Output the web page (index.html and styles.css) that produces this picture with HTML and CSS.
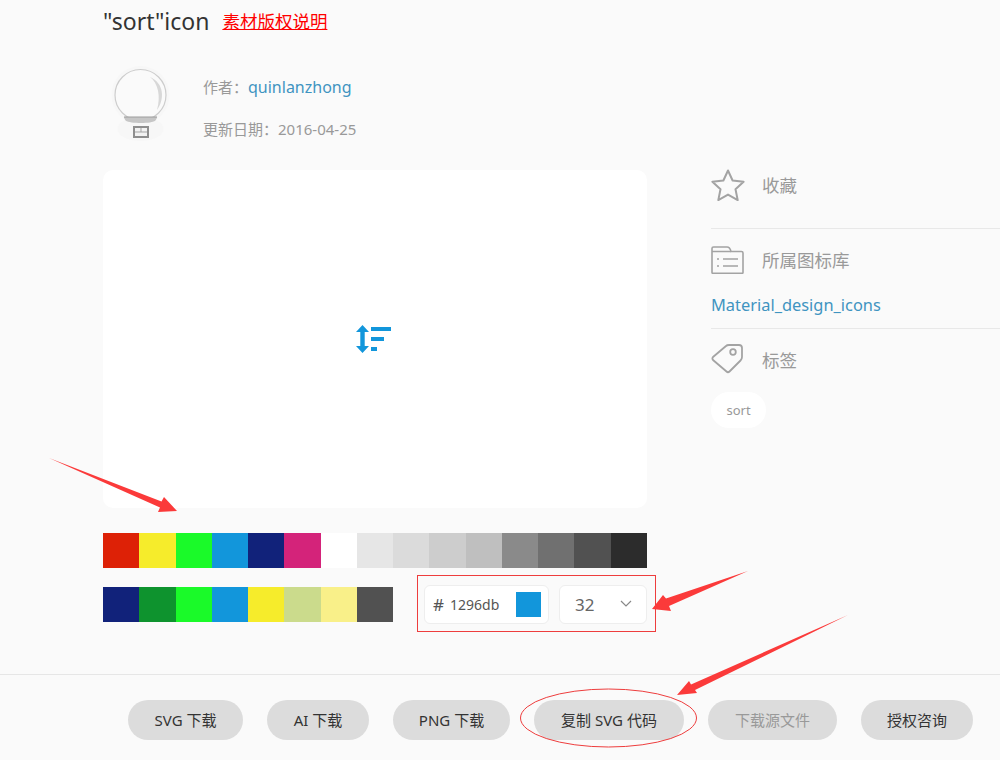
FILE: index.html
```html
<!DOCTYPE html>
<html lang="zh-CN">
<head>
  <meta charset="UTF-8" />
  <title>"sort"icon</title>
  <link rel="stylesheet" href="styles.css">
</head>
<body>
  <div class="main">
    <div class="left">
      <div class="title-row">
        <h1>"sort"icon</h1>
        <a class="license" href="#">素材版权说明</a>
      </div>
      <div class="author-row">
        <svg class="avatar" width="76" height="86" viewBox="0 0 76 86">
          <circle cx="37.500" cy="30" r="29" fill="#f7f7f7"/>
          <ellipse cx="37.500" cy="64" rx="23" ry="12" fill="#f7f7f7"/>
          <circle cx="37.500" cy="30" r="25.500" fill="#fafafa" stroke="#cdcdcd" stroke-width="1.200"/>
          <path d="M47 12c8 6 11 19 7 33 8-11 7-27-7-33z" fill="#d8d8d8"/>
          <path d="M21 52h33c0 1-1 3-2 4-2 1-7 2-14 2s-13-1-15-2c-1-1-2-3-2-4z" fill="#c6c6c6"/>
          <path d="M21 52h33" stroke="#9c9c9c" stroke-width="1"/>
          <rect x="31" y="62" width="14" height="10" fill="#f2f2f2" stroke="#8e8e8e" stroke-width="2"/>
          <path d="M32 67h12M38 63v4" stroke="#a5a5a5" stroke-width="1"/>
        </svg>
        <div class="author-info">
          <p class="author">作者：<a href="#">quinlanzhong</a></p>
          <p class="date">更新日期：2016-04-25</p>
        </div>
      </div>
      <div class="preview">
        <svg width="36" height="28" viewBox="0 0 36 28" fill="#1296db">
          <path d="M7.500 0L14 7H9.700v14H14l-6.500 7L1 21h4.300V7H1z"/>
          <rect x="16" y="2" width="20" height="4"/>
          <rect x="16" y="12" width="13" height="4"/>
          <rect x="16" y="22" width="6" height="4"/>
        </svg>
      </div>
      <div class="swatches swatches-wide">
        <span class="c-red"></span><span class="c-yellow"></span><span class="c-green"></span><span class="c-blue"></span><span class="c-navy"></span><span class="c-pink"></span><span class="c-white"></span><span class="c-g1"></span><span class="c-g2"></span><span class="c-g3"></span><span class="c-g4"></span><span class="c-g5"></span><span class="c-g6"></span><span class="c-g7"></span><span class="c-g8"></span>
      </div>
      <div class="color-row">
        <div class="swatches swatches-short">
          <span class="c-navy"></span><span class="c-dkgreen"></span><span class="c-green"></span><span class="c-blue"></span><span class="c-yellow"></span><span class="c-olive"></span><span class="c-paleyellow"></span><span class="c-g7"></span>
        </div>
        <div class="picker">
          <div class="hex-box">
            <span class="hash">#</span>
            <span class="hex">1296db</span>
            <span class="hex-color"></span>
          </div>
          <div class="size-box">
            <span>32</span>
            <svg width="12" height="7" viewBox="0 0 12 7" fill="none" stroke="#888" stroke-width="1.200"><path d="M1 1l5 5 5-5"/></svg>
          </div>
        </div>
      </div>
    </div>

    <div class="side">
      <div class="side-row fav">
        <svg width="34" height="32" viewBox="0 0 34 32" fill="none" stroke="#a3a3a3" stroke-width="2" stroke-linejoin="round"><path d="M17 1.500l4.600 10 11 1.300-8.100 7.500 2.200 10.800L17 25.600 7.300 31.100l2.200-10.800L1.400 12.800l11-1.300z"/></svg>
        <span>收藏</span>
      </div>
      <div class="side-block">
        <div class="side-row">
          <svg width="33" height="28" viewBox="0 0 33 28" fill="none" stroke="#a3a3a3" stroke-width="1.600"><path d="M1 26.500V2.500Q1 1 2.500 1H16q3 0 4 4.500h10.500q1.500 0 1.500 1.500v19.500q0 .8-.8.8H1.800q-.8 0-.8-.8z"/><path d="M1 5.500h19M6 13h2M6 20h2M12 13h15M12 20h15"/></svg>
          <span class="lib-label">所属图标库</span>
        </div>
        <a class="lib-link" href="#">Material_design_icons</a>
      </div>
      <div class="side-block tags">
        <div class="side-row">
          <svg width="33" height="31" viewBox="0 0 33 31" fill="none" stroke="#a3a3a3" stroke-width="1.800" stroke-linejoin="round"><path d="M2 13L15 2q1-1 3-1h10q3 0 3 3v9q0 2-1.500 3.500l-11 11q-1.500 1.500-3 0L2 16q-1.200-1.500 0-3z"/><circle cx="22" cy="8" r="2.800"/></svg>
          <span>标签</span>
        </div>
        <span class="tag">sort</span>
      </div>
    </div>
  </div>

  <div class="actions">
    <button class="btn btn-svg">SVG 下载</button>
    <button class="btn btn-ai">AI 下载</button>
    <button class="btn btn-png">PNG 下载</button>
    <button class="btn btn-copy">复制 SVG 代码</button>
    <button class="btn btn-source">下载源文件</button>
    <button class="btn btn-auth">授权咨询</button>
  </div>

  <!-- hand drawn annotations on top of the screenshot -->
  <svg class="marks" width="1000" height="760" viewBox="0 0 1000 760" fill="#fb3a3a">
    <path d="M49 458L161.500 501.500 164 497 177 511 158 512 160 507.500z"/>
    <path d="M748 571L666 598.500 663 595 652 609 671 611 669 606z"/>
    <path d="M848 615L691 684.500 689 681 677 695 697 693 695 690z"/>
    <ellipse cx="608.500" cy="718" rx="88" ry="29" fill="none" stroke="#ee3d3d" stroke-width="1"/>
  </svg>
</body>
</html>
```

FILE: styles.css
```css
* {
  box-sizing: border-box;
}

body {
  margin: 0;
  width: 1000px;
  height: 760px;
  overflow: hidden;
  position: relative;
  background: #fafafa;
  color: #333;
  font-family: "Noto Sans", "Noto Sans CJK SC", sans-serif;
}

a {
  text-decoration: none;
}

p {
  margin: 0;
}

.main {
  display: flex;
  height: 674px;
  padding-left: 103px;
}

.left {
  width: 544px;
  flex: none;
}

/* title */
.title-row {
  display: flex;
  align-items: center;
  gap: 13px;
  height: 44px;
  padding-bottom: 2px;
}

h1 {
  margin: 0;
  font-size: 23px;
  font-weight: 400;
  color: #333;
}

.license {
  margin-bottom: 2px;
  color: #f00;
  font-size: 17.500px;
  text-decoration: underline;
}

/* author */
.author-row {
  display: flex;
  height: 126px;
  padding-top: 21px;
}

.avatar {
  flex: none;
}

.author-info {
  margin-left: 24px;
  padding-top: 8px;
}

.author {
  font-size: 15px;
  line-height: 28px;
  color: #999;
}

.author a {
  font-size: 16px;
  color: #3f94c1;
}

.date {
  margin-top: 14px;
  font-size: 15px;
  line-height: 28px;
  color: #999;
}

.preview {
  height: 338px;
  background: #fff;
  border-radius: 10px;
  display: flex;
  align-items: center;
  justify-content: center;
}

.preview svg {
  margin-right: 4px;
}

/* colours */
.swatches {
  display: grid;
  height: 35px;
}

.swatches-wide {
  grid-template-columns: repeat(15, 1fr);
  margin-top: 25px;
}

.swatches-short {
  width: 290px;
  flex: none;
  grid-template-columns: repeat(8, 1fr);
}

.c-red { background: #dd2106; }
.c-yellow { background: #f6ec2b; }
.c-green { background: #1afa29; }
.c-blue { background: #1296db; }
.c-navy { background: #11227a; }
.c-pink { background: #d4237a; }
.c-white { background: #fff; }
.c-g1 { background: #e6e6e6; }
.c-g2 { background: #dbdbdb; }
.c-g3 { background: #cdcdcd; }
.c-g4 { background: #bfbfbf; }
.c-g5 { background: #8a8a8a; }
.c-g6 { background: #707070; }
.c-g7 { background: #515151; }
.c-g8 { background: #2c2c2c; }
.c-dkgreen { background: #0e932e; }
.c-olive { background: #cbdb8c; }
.c-paleyellow { background: #f9f089; }

.color-row {
  display: flex;
  align-items: center;
  margin-top: 9px;
}

.picker {
  display: flex;
  gap: 10px;
  width: 239px;
  height: 57px;
  flex: none;
  margin-left: 24px;
  margin-top: -2px;
  padding: 9px 8px 7px 6px;
  border: 1px solid #ee3d3d;
}

.hex-box,
.size-box {
  display: flex;
  align-items: center;
  background: #fff;
  border: 1px solid #eee;
  border-radius: 6px;
}

.hex-box {
  width: 125px;
  padding: 0 7px 0 8px;
  font-size: 14px;
  color: #555;
}

.hash {
  font-size: 17px;
  margin-right: 6px;
}

.hex-color {
  width: 25px;
  height: 25px;
  margin-left: auto;
  background: #1296db;
}

.size-box {
  width: 88px;
  padding: 0 14px 0 15px;
  justify-content: space-between;
  font-size: 17px;
  color: #666;
}

.size-box svg {
  margin-top: -2px;
}

/* right column */
.side {
  flex: 1;
  margin-left: 64px;
  padding-top: 169px;
}

.side-row {
  display: flex;
  align-items: center;
  gap: 18px;
  font-size: 17.500px;
  color: #999;
}

.side-row svg {
  flex: none;
}

.lib-label {
  margin-top: -2px;
}

.fav {
  gap: 17px;
  height: 60px;
  padding-bottom: 28px;
  border-bottom: 1px solid #e8e8e8;
}

.side-block {
  height: 100px;
  padding-top: 17px;
  border-bottom: 1px solid #e8e8e8;
}

.lib-link {
  display: block;
  margin-top: 18px;
  font-size: 16.400px;
  line-height: 26px;
  color: #3f94c1;
}

.tags {
  border-bottom: 0;
  padding-top: 15px;
}

.tag {
  display: inline-block;
  margin-top: 17px;
  width: 55px;
  height: 36px;
  line-height: 36px;
  text-align: center;
  background: #fff;
  border-radius: 18px;
  font-size: 13px;
  color: #999;
}

/* bottom buttons */
.actions {
  display: flex;
  height: 86px;
  padding: 25px 0 0 128px;
  border-top: 1px solid #e6e6e6;
}

.btn {
  height: 40px;
  margin-right: 24px;
  padding: 0 0 2px;
  border: 0;
  border-radius: 20px;
  background: #dcdcdc;
  font-family: inherit;
  font-size: 15px;
  color: #333;
}

.btn-svg { width: 115px; }
.btn-ai { width: 102px; }
.btn-png { width: 117px; }
.btn-copy { width: 150px; }
.btn-source { width: 129px; color: #999; }
.btn-auth { width: 112px; margin-right: 0; }

.marks {
  position: absolute;
  left: 0;
  top: 0;
  pointer-events: none;
}
```
